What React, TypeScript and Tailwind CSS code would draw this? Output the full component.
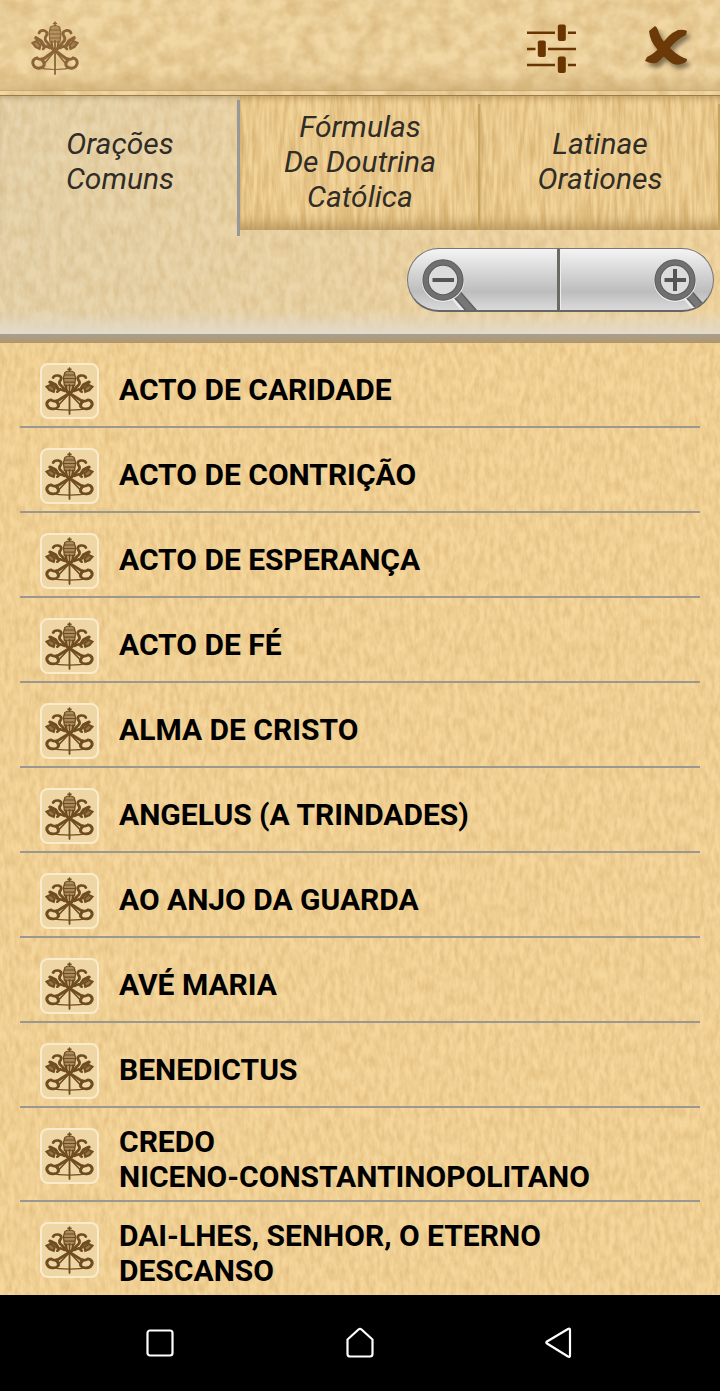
import { useId } from "react";
import clsx from "clsx";

const tabs = [
  { label: ["Orações", "Comuns"], active: true },
  { label: ["Fórmulas", "De Doutrina", "Católica"], active: false },
  { label: ["Latinae", "Orationes"], active: false },
];

const prayers = [
  ["ACTO DE CARIDADE"],
  ["ACTO DE CONTRIÇÃO"],
  ["ACTO DE ESPERANÇA"],
  ["ACTO DE FÉ"],
  ["ALMA DE CRISTO"],
  ["ANGELUS (A TRINDADES)"],
  ["AO ANJO DA GUARDA"],
  ["AVÉ MARIA"],
  ["BENEDICTUS"],
  ["CREDO", "NICENO-CONSTANTINOPOLITANO"],
  ["DAI-LHES, SENHOR, O ETERNO", "DESCANSO"],
];

// Parchment grain laid behind a panel
const Grain = ({
  frequency,
  strength,
  seed = 3,
}: {
  frequency: string;
  strength: number;
  seed?: number;
}) => {
  const id = useId();
  return (
    <svg className="pointer-events-none absolute inset-0 size-full" aria-hidden="true">
      <filter id={id} x="0" y="0" width="100%" height="100%" colorInterpolationFilters="sRGB">
        <feTurbulence type="fractalNoise" baseFrequency={frequency} numOctaves={3} seed={seed} />
        <feColorMatrix
          values={`0 0 0 0 0.66  0 0 0 0 0.46  0 0 0 0 0.16  ${strength} 0 0 0 ${-strength * 0.3}`}
        />
      </filter>
      <rect width="100%" height="100%" filter={`url(#${id})`} />
    </svg>
  );
};

const KeysEmblem = ({ className }: { className?: string }) => (
  <svg
    viewBox="0 0 48 54"
    preserveAspectRatio="none"
    className={className}
    fill="none"
    stroke="currentColor"
    strokeLinecap="round"
    aria-hidden="true"
  >
    {/* tiara */}
    <path d="M24 1v4M22.5 2.5h3" strokeWidth="1.5" />
    <path d="M19.500 6q4.500-3 9 0l1.500 6-1 9h-10L18 12z" fill="currentColor" fillOpacity=".55" strokeWidth="1.2" />
    <path d="M19 9h10M18 13h12M19 17h10" strokeWidth="1.2" />
    <path d="M20.500 21l1 7M27.500 21l-1 7" strokeWidth="2.400" />
    {/* hooks above the key bits */}
    <path d="M8 12q1-3 5-2.500 4 1 2.500 5-2 2-1 5l6 7M40 12q-1-3-5-2.500-4 1-2.500 5 2 2 1 5l-6 7" strokeWidth="2.800" />
    {/* key bits */}
    <path d="M5 17l5 3 3 5M43 17l-5 3-3 5" strokeWidth="3.600" />
    <path d="M1.500 22l4-2 4 4-1 4-4-2zM46.500 22l-4-2-4 4 1 4 4-2z" fill="currentColor" fillOpacity=".7" strokeWidth="2.200" />
    <path d="M12 28l3-3 4 2M36 28l-3-3-4 2" strokeWidth="2.600" />
    {/* shafts */}
    <path d="M18 25l19 14M30 25L11 39" strokeWidth="3" />
    <path d="M23 31L13 43M25 31l10 12" strokeWidth="1.600" />
    {/* bows */}
    <path d="M11 38q-3 1-5-1-5 1-4 6 2 5 7 4 5-1 4-5zM37 38q3 1 5-1 5 1 4 6-2 5-7 4-5-1-4-5z" strokeWidth="3" />
    {/* cord */}
    <path d="M3 46q21 5 42 0" strokeWidth="1.200" />
    <path d="M24 20v33" strokeWidth="1.800" />
  </svg>
);

const SlidersIcon = () => (
  <svg viewBox="0 0 50 50" className="h-[50px] w-[50px] text-[#6a3500]" fill="currentColor">
    <path d="M0 7.500h28v2.600H0zM41 7.500h8v2.600h-8zM0 23.700h8.500v2.600H0zM21 23.700h28v2.600H21zM0 39.700h28v2.600H0zM41 39.700h8v2.600h-8z" />
    <rect x="30.800" y="0.500" width="8" height="16.500" rx="2" />
    <rect x="10.800" y="16.500" width="8" height="16.500" rx="2" />
    <rect x="30.800" y="32.500" width="8" height="16.500" rx="2" />
  </svg>
);

const CloseIcon = () => (
  <svg
    viewBox="0 0 52 52"
    className="h-[52px] w-[52px] drop-shadow-[3px_4px_2px_rgba(70,60,40,0.6)]"
    fill="#6c3a09"
  >
    <path d="M8 9L14 4q2 1 3 4 2 8 9 15 8 9 17 13l3 1q0 3-3 4-8 4-14-1-8-6-13-13Q9 19 8 9z" />
    <path d="M37 8q6-1 9 1l-1 4q-9 4-16 13-5 8-12 14-4 3-13-1l2-4q7-3 13-10 8-13 18-17z" />
  </svg>
);

const Magnifier = ({ plus = false }: { plus?: boolean }) => (
  <svg viewBox="0 0 60 62" className="h-[62px] w-[60px] shrink-0" fill="none" aria-hidden="true">
    <path d="M31 45l18 22" stroke="#ececec" strokeWidth="7" />
    <path d="M33 42l22 25" stroke="#606060" strokeWidth="9.500" />
    <path d="M33 42l22 25" stroke="#777" strokeWidth="6.500" />
    <circle cx="22" cy="31.500" r="18" stroke="#f2f2f2" strokeWidth="6.500" />
    <circle cx="22" cy="31" r="17.400" stroke="#5c5c5c" strokeWidth="6.500" fill="#dcdcdc" />
    <circle cx="22" cy="31" r="17.400" stroke="#707070" strokeWidth="4.500" />
    <path d={plus ? "M11.500 31h21.500M22 20v22" : "M11.500 31h21.500"} stroke="#555" strokeWidth="4" />
  </svg>
);

const ZoomControls = () => (
  <div className="flex h-16 w-[307px] overflow-hidden rounded-full border border-[#777] border-b-2 border-b-[#666] bg-linear-to-b from-[#f4f4f4] via-[#bdbdbd] via-70% to-[#dadada]">
    <button className="flex w-[152px] items-start pl-[13px]" aria-label="Zoom out">
      <Magnifier />
    </button>
    <div className="w-1 shrink-0 border-r border-r-[#eee] bg-[#6b6a64]" />
    <button className="flex flex-1 items-start pl-[92px]" aria-label="Zoom in">
      <Magnifier plus />
    </button>
  </div>
);

const Header = () => (
  <header className="relative h-24 bg-[#f0d7a4]">
    <Grain frequency="0.06 0.06" strength={0.5} seed={8} />
    <div className="relative flex h-[91px] items-start border-b border-[#c9ab72] bg-linear-to-b from-transparent from-80% to-[#b8955866] pl-[31px] pt-[21px]">
      <KeysEmblem className="h-[54px] w-12 text-[#8b6537]" />
      <button className="ml-[448px] mt-[3px]" aria-label="Settings">
        <SlidersIcon />
      </button>
      <button className="ml-[64px] mt-px" aria-label="Close">
        <CloseIcon />
      </button>
    </div>
    <div className="relative h-[5px] border-b border-[#9c7b46]" />
  </header>
);

const Tabs = () => (
  <div className="relative flex h-[140px]">
    {tabs.map((tab) => (
      <button
        key={tab.label[0]}
        className={clsx(
          "relative flex w-60 items-center justify-center text-[30px] leading-[35px] italic text-[#302c26]",
          tab.active ? "h-[140px] pb-[11px]" : "h-[134px] bg-[#f2d49a] pb-1"
        )}
      >
        {!tab.active && <Grain frequency="0.24 0.03" strength={0.6} />}
        {/* edge shading, over the grain */}
        <span
          className={clsx(
            "absolute inset-0",
            tab.active
              ? "shadow-[inset_0_5px_6px_-4px_rgba(110,90,50,0.4)]"
              : "shadow-[inset_0_5px_6px_-3px_rgba(125,88,30,0.4),inset_0_-14px_14px_-8px_rgba(125,88,30,0.45)]"
          )}
        />
        <span className="relative">
          {tab.label.map((line) => (
            <span key={line} className="block">
              {line}
            </span>
          ))}
        </span>
        <span
          className={clsx(
            "absolute right-0 bottom-0",
            tab.active ? "top-1 w-[3px] bg-[#989898]" : "top-2 w-0.5 bg-[#c6a45d]"
          )}
        />
      </button>
    ))}
  </div>
);

const App = () => {
  return (
    <div className="flex h-[1391px] w-[720px] flex-col overflow-hidden bg-[#f5d69b] font-[Roboto,sans-serif]">
      <Header />

      <section className="relative h-[247px] bg-linear-to-r from-[#e7d5ae] to-[#f1d6a2]">
        <Grain frequency="0.14 0.07" strength={0.35} />
        <Tabs />
        <div className="relative flex h-[98px] justify-end bg-linear-to-b from-transparent from-75% to-[#e2dac9] pt-3 pr-[6px]">
          <ZoomControls />
        </div>
        <div className="relative h-[9px] bg-linear-to-b from-[#a79f90] to-[#b39669]" />
      </section>

      <main className="relative h-[952px] overflow-hidden">
        <Grain frequency="0.2 0.08" strength={0.38} />
        <ul className="relative px-5">
          {prayers.map((lines) => (
            <li
              key={lines[0]}
              className="flex items-start border-b-2 border-[#9b9791] pb-1.5 pl-5 last:border-transparent"
            >
              <div className="mt-5 flex h-[56px] w-[59px] shrink-0 items-center justify-center rounded-[8px] border-2 border-[#faebcc] bg-[#efd6a5]">
                <KeysEmblem className="h-[48px] w-[49px] text-[#6f4d20]" />
              </div>
              <div className="mt-4 ml-5 flex min-h-[61px] flex-col justify-center text-[30px] leading-[35px] font-bold text-black">
                {lines.map((line) => (
                  <span key={line} className="block whitespace-nowrap">
                    {line}
                  </span>
                ))}
              </div>
            </li>
          ))}
        </ul>
      </main>

      <nav className="flex h-24 items-center justify-between bg-black px-[145px]">
        <button aria-label="Recent apps">
          <svg viewBox="0 0 30 32" className="h-8 w-[30px]" fill="none" stroke="white" strokeWidth="2.200">
            <rect x="2.500" y="3.500" width="25" height="25" rx="2.500" />
          </svg>
        </button>
        <button aria-label="Home">
          <svg viewBox="0 0 30 32" className="h-8 w-[30px]" fill="none" stroke="white" strokeWidth="2.200" strokeLinejoin="round">
            <path d="M2.500 12.500L13.500 2.500Q15 1.200 16.500 2.500L27.500 12.500V27q0 2.500-2.500 2.500H5q-2.500 0-2.500-2.500z" />
          </svg>
        </button>
        <button aria-label="Back">
          <svg viewBox="0 0 30 32" className="h-8 w-[30px]" fill="none" stroke="white" strokeWidth="2.200" strokeLinejoin="round">
            <path d="M2 14.500Q0.500 15.500 2 16.500L23 29.500q2 1 2-1V3q0-2-2-1z" />
          </svg>
        </button>
      </nav>
    </div>
  );
};

export default App;
